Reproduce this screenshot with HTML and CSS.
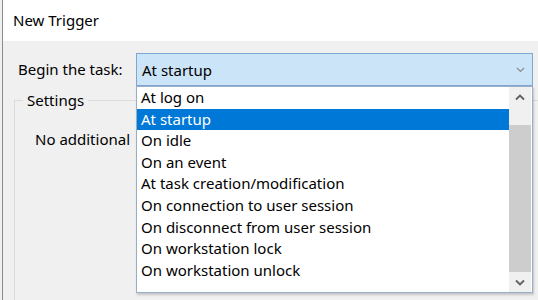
FILE: index.html
```html
<!DOCTYPE html>
<html>
<head>
<meta charset="utf-8">
<link rel="stylesheet" href="styles.css">
</head>
<body>
<div class="window">
  <div class="titlebar">New Trigger</div>
  <div class="content">
    <div class="row">
      <span class="label">Begin the task:</span>
      <div class="combo">
        <span class="combo-text">At startup</span>
        <svg class="combo-arrow" width="9" height="6" viewBox="0 0 9 6"><path d="M1 1 L4.5 4.5 L8 1" fill="none" stroke="#8a8a8a" stroke-width="1.2"/></svg>
        <div class="dropdown">
          <ul class="items">
            <li>At log on</li>
            <li class="selected">At startup</li>
            <li>On idle</li>
            <li>On an event</li>
            <li>At task creation/modification</li>
            <li>On connection to user session</li>
            <li>On disconnect from user session</li>
            <li>On workstation lock</li>
            <li>On workstation unlock</li>
          </ul>
          <div class="scrollbar">
            <div class="sb-btn"><svg width="10" height="7" viewBox="0 0 10 7"><path d="M1 5.5 L5 1.5 L9 5.5" fill="none" stroke="#606060" stroke-width="1.8"/></svg></div>
            <div class="sb-track"><div class="sb-thumb"></div></div>
            <div class="sb-btn"><svg width="10" height="7" viewBox="0 0 10 7"><path d="M1 1.5 L5 5.5 L9 1.5" fill="none" stroke="#606060" stroke-width="1.8"/></svg></div>
          </div>
        </div>
      </div>
    </div>
    <div class="group">
      <span class="group-title">Settings</span>
      <div class="group-body">No additional</div>
    </div>
  </div>
</div>
</body>
</html>
```
FILE: styles.css
```css
html, body {
  margin: 0;
  padding: 0;
}
body {
  width: 538px;
  height: 300px;
  overflow: hidden;
  background: #f0f0f0;
  font-family: "Noto Sans", "Open Sans", sans-serif;
  font-size: 15px;
  color: #000;
}
.window {
  margin-left: 2px;
  border-left: 1px solid #8c8c8c;
  height: 300px;
  overflow: hidden;
  background: #f0f0f0;
}
.titlebar {
  height: 41px;
  background: #fff;
  box-sizing: border-box;
  padding-left: 10px;
  line-height: 40px;
  font-size: 15px;
}
.content {
  padding-top: 12px;
}
.row {
  display: flex;
  align-items: stretch;
  height: 33px;
}
.label {
  width: 133px;
  padding-left: 15px;
  box-sizing: border-box;
  line-height: 33px;
  white-space: nowrap;
  flex: none;
}
.combo {
  position: relative;
  width: 397px;
  box-sizing: border-box;
  border: 1px solid #7ea8d0;
  background: #cce4f7;
  display: flex;
  align-items: center;
  padding-left: 5px;
  z-index: 2;
}
.combo-text {
  flex: 1;
}
.combo-arrow {
  margin-right: 7px;
}
.dropdown {
  position: absolute;
  left: -1px;
  top: 32px;
  width: 397px;
  height: 207px;
  box-sizing: border-box;
  background: #fff;
  border: 1px solid #97aec6;
  box-shadow: 1px 2px 2px rgba(0,0,0,0.18);
  display: flex;
}
.items {
  list-style: none;
  margin: 0;
  padding: 0;
  flex: 1;
}
.items li {
  height: 21.6px;
  line-height: 21.6px;
  padding-left: 4px;
  white-space: nowrap;
}
.items li.selected {
  background: #0078d7;
  color: #fff;
}
.scrollbar {
  width: 22px;
  margin-right: 1px;
  background: #f0f0f0;
  display: flex;
  flex-direction: column;
}
.sb-btn {
  height: 20px;
  display: flex;
  align-items: center;
  justify-content: center;
  flex: none;
}
.sb-track {
  flex: 1;
  display: flex;
  flex-direction: column;
  justify-content: flex-end;
}
.sb-thumb {
  height: 147px;
  background: #cdcdcd;
}
.group {
  position: relative;
  margin: 14px 0 0 11px;
  height: 200px;
  border: 1px solid #dcdcdc;
  border-bottom: none;
  border-right: none;
}
.group-title {
  position: absolute;
  top: -11px;
  left: 8px;
  padding: 0 4px;
  background: #f0f0f0;
  line-height: 20px;
}
.group-body {
  padding: 28px 0 0 20px;
  white-space: nowrap;
}
```
